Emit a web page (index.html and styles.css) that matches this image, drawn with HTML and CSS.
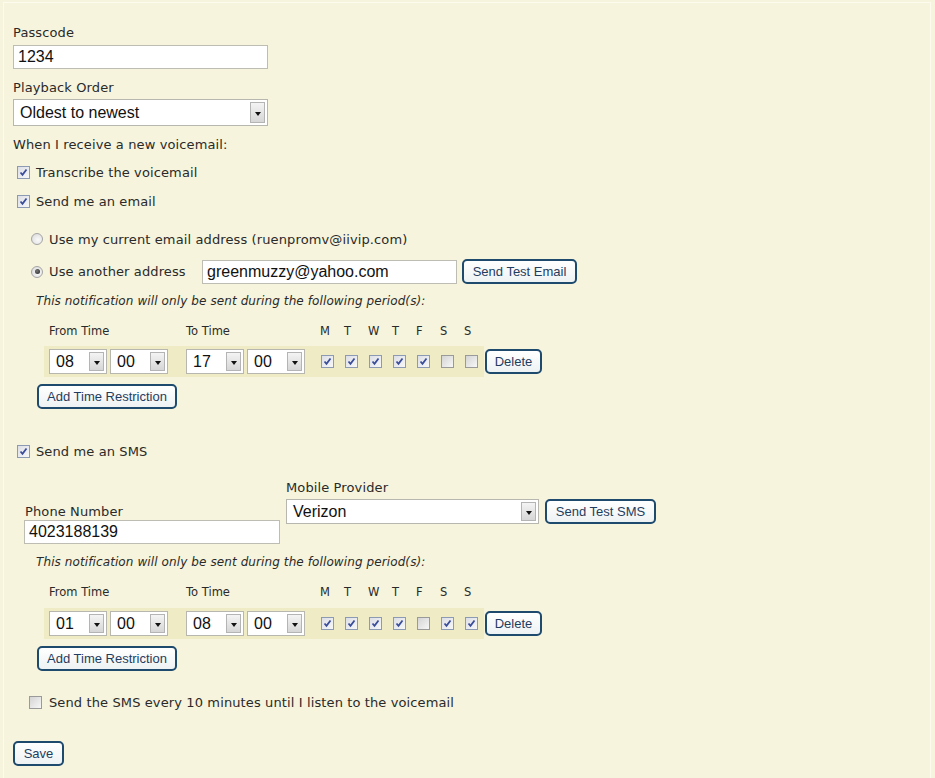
FILE: index.html
```html
<!DOCTYPE html>
<html>
<head>
<meta charset="utf-8">
<link rel="stylesheet" href="styles.css">
</head>
<body>
<div class="page">
  <div class="label lbl-pass">Passcode</div>
  <div class="input in-pass">1234</div>
  <div class="label lbl-play">Playback Order</div>
  <div class="sel sel-play"><span class="sel-val">Oldest to newest</span><span class="sel-btn"></span></div>
  <div class="label lbl-when">When I receive a new voicemail:</div>

  <div class="row cbrow r-trans"><span class="cb on"><svg viewBox="0 0 11 11"><path d="M2.5 5.5 L4.5 7.8 L8.5 2.5"/></svg></span><span>Transcribe the voicemail</span></div>
  <div class="row cbrow r-email"><span class="cb on"><svg viewBox="0 0 11 11"><path d="M2.5 5.5 L4.5 7.8 L8.5 2.5"/></svg></span><span>Send me an email</span></div>

  <div class="row radrow r-cur"><span class="radio"></span><span>Use my current email address (ruenpromv@iivip.com)</span></div>
  <div class="row radrow r-other"><span class="radio on"></span><span class="other-lbl">Use another address</span><div class="input in-email">greenmuzzy@yahoo.com</div><span class="btn btn-email">Send Test Email</span></div>

  <div class="note note1">This notification will only be sent during the following period(s):</div>

  <div class="heads h1">
    <span class="hd-from">From Time</span><span class="hd-to">To Time</span>
    <span class="day">M</span><span class="day">T</span><span class="day">W</span><span class="day">T</span><span class="day">F</span><span class="day">S</span><span class="day">S</span>
  </div>
  <div class="trow t1">
    <div class="hl">
      <div class="sel tsel"><span class="sel-val">08</span><span class="sel-btn"></span></div>
      <div class="sel tsel gap3"><span class="sel-val">00</span><span class="sel-btn"></span></div>
      <div class="sel tsel gap18"><span class="sel-val">17</span><span class="sel-btn"></span></div>
      <div class="sel tsel gap3"><span class="sel-val">00</span><span class="sel-btn"></span></div>
      <div class="days">
        <span class="cb on"><svg viewBox="0 0 11 11"><path d="M2.5 5.5 L4.5 7.8 L8.5 2.5"/></svg></span>
        <span class="cb on"><svg viewBox="0 0 11 11"><path d="M2.5 5.5 L4.5 7.8 L8.5 2.5"/></svg></span>
        <span class="cb on"><svg viewBox="0 0 11 11"><path d="M2.5 5.5 L4.5 7.8 L8.5 2.5"/></svg></span>
        <span class="cb on"><svg viewBox="0 0 11 11"><path d="M2.5 5.5 L4.5 7.8 L8.5 2.5"/></svg></span>
        <span class="cb on"><svg viewBox="0 0 11 11"><path d="M2.5 5.5 L4.5 7.8 L8.5 2.5"/></svg></span>
        <span class="cb"></span>
        <span class="cb"></span>
      </div>
    </div>
    <span class="btn btn-del">Delete</span>
  </div>
  <div class="btnrow add1"><span class="btn btn-add">Add Time Restriction</span></div>

  <div class="row cbrow r-sms"><span class="cb on"><svg viewBox="0 0 11 11"><path d="M2.5 5.5 L4.5 7.8 L8.5 2.5"/></svg></span><span>Send me an SMS</span></div>

  <div class="smsgrid">
    <div class="phone-col">
      <div class="label">Phone Number</div>
      <div class="input in-phone">4023188139</div>
    </div>
    <div class="prov-col">
      <div class="label">Mobile Provider</div>
      <div class="prov-row">
        <div class="sel sel-prov"><span class="sel-val">Verizon</span><span class="sel-btn"></span></div>
        <span class="btn btn-sms">Send Test SMS</span>
      </div>
    </div>
  </div>

  <div class="note note2">This notification will only be sent during the following period(s):</div>

  <div class="heads h2">
    <span class="hd-from">From Time</span><span class="hd-to">To Time</span>
    <span class="day">M</span><span class="day">T</span><span class="day">W</span><span class="day">T</span><span class="day">F</span><span class="day">S</span><span class="day">S</span>
  </div>
  <div class="trow t2">
    <div class="hl">
      <div class="sel tsel"><span class="sel-val">01</span><span class="sel-btn"></span></div>
      <div class="sel tsel gap3"><span class="sel-val">00</span><span class="sel-btn"></span></div>
      <div class="sel tsel gap18"><span class="sel-val">08</span><span class="sel-btn"></span></div>
      <div class="sel tsel gap3"><span class="sel-val">00</span><span class="sel-btn"></span></div>
      <div class="days">
        <span class="cb on"><svg viewBox="0 0 11 11"><path d="M2.5 5.5 L4.5 7.8 L8.5 2.5"/></svg></span>
        <span class="cb on"><svg viewBox="0 0 11 11"><path d="M2.5 5.5 L4.5 7.8 L8.5 2.5"/></svg></span>
        <span class="cb on"><svg viewBox="0 0 11 11"><path d="M2.5 5.5 L4.5 7.8 L8.5 2.5"/></svg></span>
        <span class="cb on"><svg viewBox="0 0 11 11"><path d="M2.5 5.5 L4.5 7.8 L8.5 2.5"/></svg></span>
        <span class="cb"></span>
        <span class="cb on"><svg viewBox="0 0 11 11"><path d="M2.5 5.5 L4.5 7.8 L8.5 2.5"/></svg></span>
        <span class="cb on"><svg viewBox="0 0 11 11"><path d="M2.5 5.5 L4.5 7.8 L8.5 2.5"/></svg></span>
      </div>
    </div>
    <span class="btn btn-del">Delete</span>
  </div>
  <div class="btnrow add2"><span class="btn btn-add">Add Time Restriction</span></div>

  <div class="row cbrow r-every"><span class="cb"></span><span>Send the SMS every 10 minutes until I listen to the voicemail</span></div>

  <div class="btnrow save"><span class="btn btn-save">Save</span></div>
</div>
</body>
</html>
```
FILE: styles.css
```css
html, body {
  margin: 0;
  padding: 0;
  background: #f6f4dc;
}
body {
  font-family: "DejaVu Sans", Verdana, sans-serif;
  font-size: 13px;
  letter-spacing: 0.12px;
  color: #2a2a2a;
}
.page {
  margin: 2px 4px 0 3px;
  border: 1px solid #fcfbee;
  border-bottom: none;
  padding: 22px 0 12px 9px;
  height: 776px;
  box-sizing: border-box;
}
.label {
  height: 16px;
  line-height: 16px;
  white-space: nowrap;
}
.input {
  box-sizing: border-box;
  background: #fff;
  border: 1px solid #bdbdb4;
  height: 24px;
  line-height: 22px;
  padding-left: 4px;
  font-family: "Liberation Sans", Arial, sans-serif;
  font-size: 16px;
  letter-spacing: 0;
  color: #111;
  white-space: nowrap;
}
.in-pass { width: 255px; margin-top: 4px; }
.lbl-play { margin-top: 11px; }
.sel {
  box-sizing: border-box;
  display: flex;
  align-items: center;
  background: #fff;
  border: 1px solid #b7b7b0;
  font-family: "Liberation Sans", Arial, sans-serif;
  font-size: 16px;
  letter-spacing: 0;
  color: #111;
}
.sel-val {
  flex: 1;
  padding-left: 6px;
  white-space: nowrap;
}
.sel-btn {
  box-sizing: border-box;
  width: 15px;
  height: 19px;
  margin-right: 2px;
  border: 1px solid #b4b4b4;
  background: linear-gradient(#f4f4f4, #d6d6d6);
  display: flex;
  align-items: center;
  justify-content: center;
}
.sel-btn::after {
  content: "";
  width: 0;
  height: 0;
  margin-top: 2px;
  border-left: 3px solid transparent;
  border-right: 3px solid transparent;
  border-top: 4px solid #111;
}
.sel-play { width: 255px; height: 27px; margin-top: 3px; }
.sel-play .sel-btn { height: 21px; }
.lbl-when { margin-top: 11px; }

.row {
  display: flex;
  align-items: center;
  white-space: nowrap;
}
.cbrow { height: 16px; padding-left: 4px; }
.cbrow .cb { margin-right: 6px; }
.r-trans { margin-top: 11px; }
.r-email { margin-top: 13px; }
.cb {
  box-sizing: border-box;
  display: inline-block;
  width: 13px;
  height: 13px;
  border: 1px solid #9a9a9a;
  background: linear-gradient(135deg, #d4d4d4, #f7f7f7);
  flex: none;
}
.cb.on {
  border-color: #8d9ab4;
  background: linear-gradient(135deg, #dcdfe6, #f7f7f7);
}
.cb svg {
  display: block;
  width: 11px;
  height: 11px;
}
.cb path {
  fill: none;
  stroke: #3a4d9a;
  stroke-width: 1.8;
}
.radrow { padding-left: 18px; }
.radio {
  box-sizing: border-box;
  width: 12px;
  height: 12px;
  border-radius: 50%;
  border: 1px solid #a4a4a4;
  background: radial-gradient(circle at 60% 60%, #fafafa, #d8d8d8);
  margin-right: 6px;
  flex: none;
  display: flex;
  align-items: center;
  justify-content: center;
}
.radio.on::after {
  content: "";
  width: 5px;
  height: 5px;
  border-radius: 50%;
  background: radial-gradient(circle at 40% 40%, #777, #222);
}
.r-cur { height: 16px; margin-top: 22px; }
.r-other { height: 25px; margin-top: 12px; }
.other-lbl { width: 153px; }
.in-email { width: 255px; }
.btn {
  box-sizing: border-box;
  display: inline-flex;
  align-items: center;
  justify-content: center;
  height: 25px;
  border: 2px solid #1e4a6e;
  border-radius: 5px;
  background: linear-gradient(#ffffff, #eef2f3);
  font-family: "Liberation Sans", Arial, sans-serif;
  font-size: 13px;
  letter-spacing: 0;
  color: #1f3d60;
  white-space: nowrap;
  flex: none;
}
.btn-email { width: 115px; margin-left: 5px; }
.note {
  font-style: italic;
  font-size: 12px;
  letter-spacing: 0.1px;
  height: 16px;
  line-height: 16px;
  padding-left: 23px;
  white-space: nowrap;
}
.note1 { margin-top: 9px; }

.heads {
  display: flex;
  align-items: center;
  height: 16px;
  font-size: 11.5px;
  letter-spacing: 0;
  white-space: nowrap;
}
.hd-from { margin-left: 36px; width: 137px; }
.hd-to { width: 133px; }
.day { width: 24px; text-align: left; padding-left: 1px; box-sizing: border-box; }
.h1 { margin-top: 14px; }
.h2 { margin-top: 14px; }
.trow {
  display: flex;
  align-items: center;
}
.t1 { margin-top: 7px; }
.t2 { margin-top: 8px; }
.hl {
  display: flex;
  align-items: center;
  background: #efecc5;
  height: 31px;
  margin-left: 31px;
  padding: 0 6px 0 5px;
}
.tsel { width: 58px; height: 25px; }
.tsel .sel-btn { height: 19px; }
.gap3 { margin-left: 3px; }
.gap18 { margin-left: 18px; }
.days {
  display: flex;
  gap: 11px;
  margin-left: 16px;
}
.btn-del { width: 57px; margin-left: 1px; }
.btnrow { display: flex; }
.add1, .add2 { margin-top: 7px; padding-left: 24px; }
.btn-add { width: 140px; }
.r-sms { margin-top: 34px; }

.smsgrid {
  display: flex;
  align-items: flex-start;
  margin-top: 21px;
  padding-left: 11px;
}
.phone-col { width: 256px; padding-top: 24px; }
.phone-col .label { padding-left: 1px; }
.in-phone { width: 256px; }
.prov-col { margin-left: 6px; }
.prov-row { display: flex; align-items: center; margin-top: 3px; }
.sel-prov { width: 253px; height: 25px; }
.sel-prov .sel-btn { height: 19px; }
.btn-sms { width: 111px; height: 25px; margin-left: 6px; }
.note2 { margin-top: 10px; }

.r-every { margin-top: 23px; padding-left: 16px; }
.r-every .cb { margin-right: 7px; }
.save { margin-top: 31px; }
.btn-save { width: 51px; }
```
